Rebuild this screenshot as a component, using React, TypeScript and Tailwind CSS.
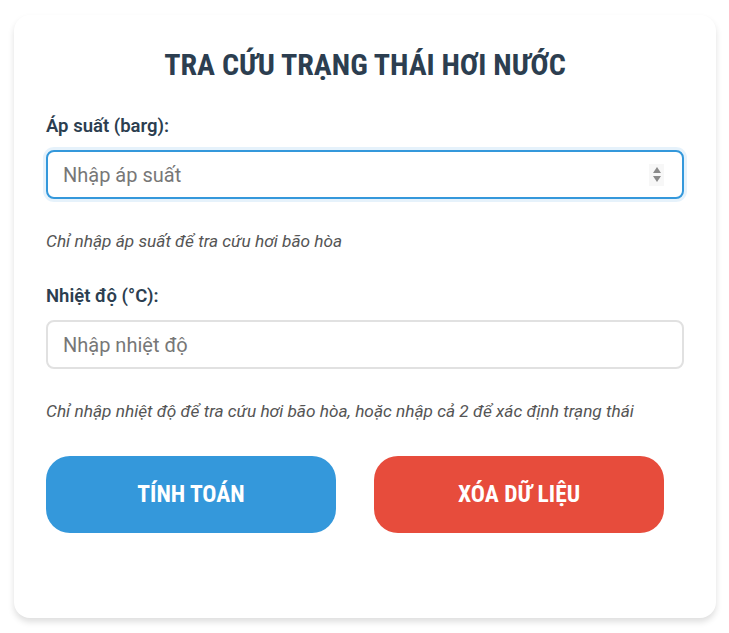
import React from "react";

function Field({
  label,
  placeholder,
  hint,
  focused,
}: {
  label: string;
  placeholder: string;
  hint: string;
  focused?: boolean;
}) {
  return (
    <div className="flex flex-col">
      <label className="text-[18.5px] font-semibold leading-6 text-[#2c3e50]">{label}</label>
      <div className="relative mt-3">
        <input
          type="text"
          placeholder={placeholder}
          className={`h-[49px] w-full rounded-lg border-2 bg-white px-[15px] text-[20px] text-[#333] outline-none placeholder:text-[#777] ${
            focused
              ? "border-[#3498db] shadow-[0_0_0_3px_rgba(52,152,219,0.12)]"
              : "border-[#e1e1e1]"
          }`}
        />
        {focused && (
          <div className="absolute right-[20px] top-1/2 flex h-[22px] w-[15px] -translate-y-1/2 flex-col items-center justify-center gap-[3px] bg-[#f7f7f7]">
            <span className="h-0 w-0 border-x-[4px] border-b-[6px] border-x-transparent border-b-[#8a8a8a]" />
            <span className="h-0 w-0 border-x-[4px] border-t-[6px] border-x-transparent border-t-[#8a8a8a]" />
          </div>
        )}
      </div>
      <p className="mt-[32px] text-[17.25px] italic leading-5 text-[#555]">{hint}</p>
    </div>
  );
}

export default function App() {
  return (
    <div className="min-h-screen bg-white font-['Roboto','Noto_Sans',sans-serif]">
      <div className="ml-[14px] mt-[15px] w-[702px] rounded-2xl bg-white px-8 pb-[85px] pt-[32px] shadow-[0_4px_6px_rgba(0,0,0,0.13)]">
        <h1 className="text-center font-['Roboto_Condensed','Roboto',sans-serif] text-[30px] font-bold leading-9 text-[#2c3e50] [font-stretch:condensed]">
          TRA CỨU TRẠNG THÁI HƠI NƯỚC
        </h1>
        <div className="mt-[31px] flex flex-col gap-[33px]">
          <Field
            label="Áp suất (barg):"
            placeholder="Nhập áp suất"
            hint="Chỉ nhập áp suất để tra cứu hơi bão hòa"
            focused
          />
          <Field
            label="Nhiệt độ (°C):"
            placeholder="Nhập nhiệt độ"
            hint="Chỉ nhập nhiệt độ để tra cứu hơi bão hòa, hoặc nhập cả 2 để xác định trạng thái"
          />
        </div>
        <div className="mt-[35px] flex gap-[38px]">
          <button className="h-[77px] w-[290px] rounded-[24px] bg-[#3498db] font-['Roboto_Condensed','Roboto',sans-serif] text-[23.5px] font-bold text-white [font-stretch:condensed]">
            TÍNH TOÁN
          </button>
          <button className="h-[77px] w-[290px] rounded-[24px] bg-[#e74c3c] font-['Roboto_Condensed','Roboto',sans-serif] text-[23.5px] font-bold text-white [font-stretch:condensed]">
            XÓA DỮ LIỆU
          </button>
        </div>
      </div>
    </div>
  );
}
